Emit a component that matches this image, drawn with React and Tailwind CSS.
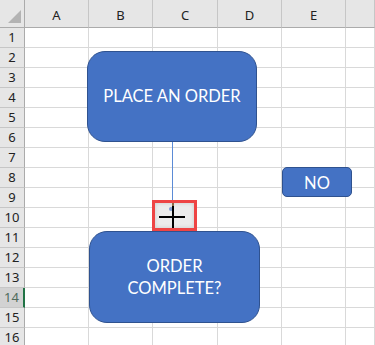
import React from 'react'

const COLS = ['A', 'B', 'C', 'D', 'E', '']
const ROWS = Array.from({ length: 16 }, (_, i) => i + 1)

const hdrFont = { fontFamily: '"Noto Sans", "Open Sans", sans-serif' }
const shapeFont = { fontFamily: 'Lato, "Liberation Sans", sans-serif' }

function Corner() {
  return (
    <div className="flex items-end justify-end pr-[3px] pb-[4px] bg-[#e6e6e6] border-r border-b border-[#ababab]">
      <svg width="13" height="13" viewBox="0 0 13 13">
        <polygon points="13,0 13,13 0,13" fill="#b3b3b3" />
      </svg>
    </div>
  )
}

export default function App() {
  return (
    <div className="relative w-[375px] h-[345px] overflow-hidden bg-white select-none">
      {/* Sheet grid */}
      <div className="grid grid-cols-[25px_64px_64px_65px_64px_64px_1fr] grid-rows-[28px_repeat(16,20px)]">
        <Corner />
        {COLS.map((c, i) => (
          <div
            key={i}
            className="flex items-end justify-center pb-[2px] bg-[#e6e6e6] border-r border-r-[#c6c6c6] border-b border-b-[#ababab] text-[13px] text-[#222]"
            style={hdrFont}
          >
            {c}
          </div>
        ))}
        {ROWS.map((r) => (
          <React.Fragment key={r}>
            {r === 14 ? (
              <div
                className="flex items-center justify-center bg-[#d2d2d2] border-b border-b-[#c6c6c6] border-r-2 border-r-[#217346] text-[13px] text-[#4f6b5c]"
                style={hdrFont}
              >
                {r}
              </div>
            ) : (
              <div
                className="flex items-center justify-center bg-[#e6e6e6] border-b border-b-[#c6c6c6] border-r border-r-[#ababab] text-[13px] text-[#222]"
                style={hdrFont}
              >
                {r}
              </div>
            )}
            {COLS.map((_, i) => (
              <div key={i} className="border-r border-b border-[#d9d9d9]" />
            ))}
          </React.Fragment>
        ))}
      </div>

      {/* Connector */}
      <div className="absolute left-[172px] top-[142px] w-px h-[62px] bg-[#5b8bd6]" />

      {/* Flowchart shapes */}
      <div
        className="absolute left-[87px] top-[51px] w-[170px] h-[91px] flex items-center justify-center rounded-[18px] bg-[#4472c4] border border-[#2f528f] text-white text-[16.5px]"
        style={shapeFont}
      >
        PLACE AN ORDER
      </div>

      <div
        className="absolute left-[89px] top-[231px] w-[171px] h-[92px] flex flex-col items-center justify-center rounded-[18px] bg-[#4472c4] border border-[#2f528f] text-white text-[16.5px] leading-[22px] text-center"
        style={shapeFont}
      >
        <span>ORDER</span>
        <span>COMPLETE?</span>
      </div>

      <div
        className="absolute left-[282px] top-[167px] w-[70px] h-[30px] flex items-center justify-center pt-[3px] rounded-[5px] bg-[#4472c4] border border-[#2f528f] text-white text-[16.5px]"
        style={shapeFont}
      >
        NO
      </div>

      {/* Highlighted cursor */}
      <div className="absolute left-[152px] top-[200px] w-[45px] h-[31px] border-[3px] border-[#ee4444] bg-[#ececec] shadow-[inset_0_0_4px_rgba(0,0,0,0.15)]">
        <svg width="39" height="25" viewBox="0 0 39 25">
          <circle cx="16" cy="6" r="2" fill="#7d9ad0" />
          <rect x="17" y="0" width="2" height="6" fill="#8a6a4a" />
          <rect x="17" y="3" width="2" height="22" fill="#000" />
          <rect x="4" y="13" width="26" height="2" fill="#000" />
        </svg>
      </div>
    </div>
  )
}
